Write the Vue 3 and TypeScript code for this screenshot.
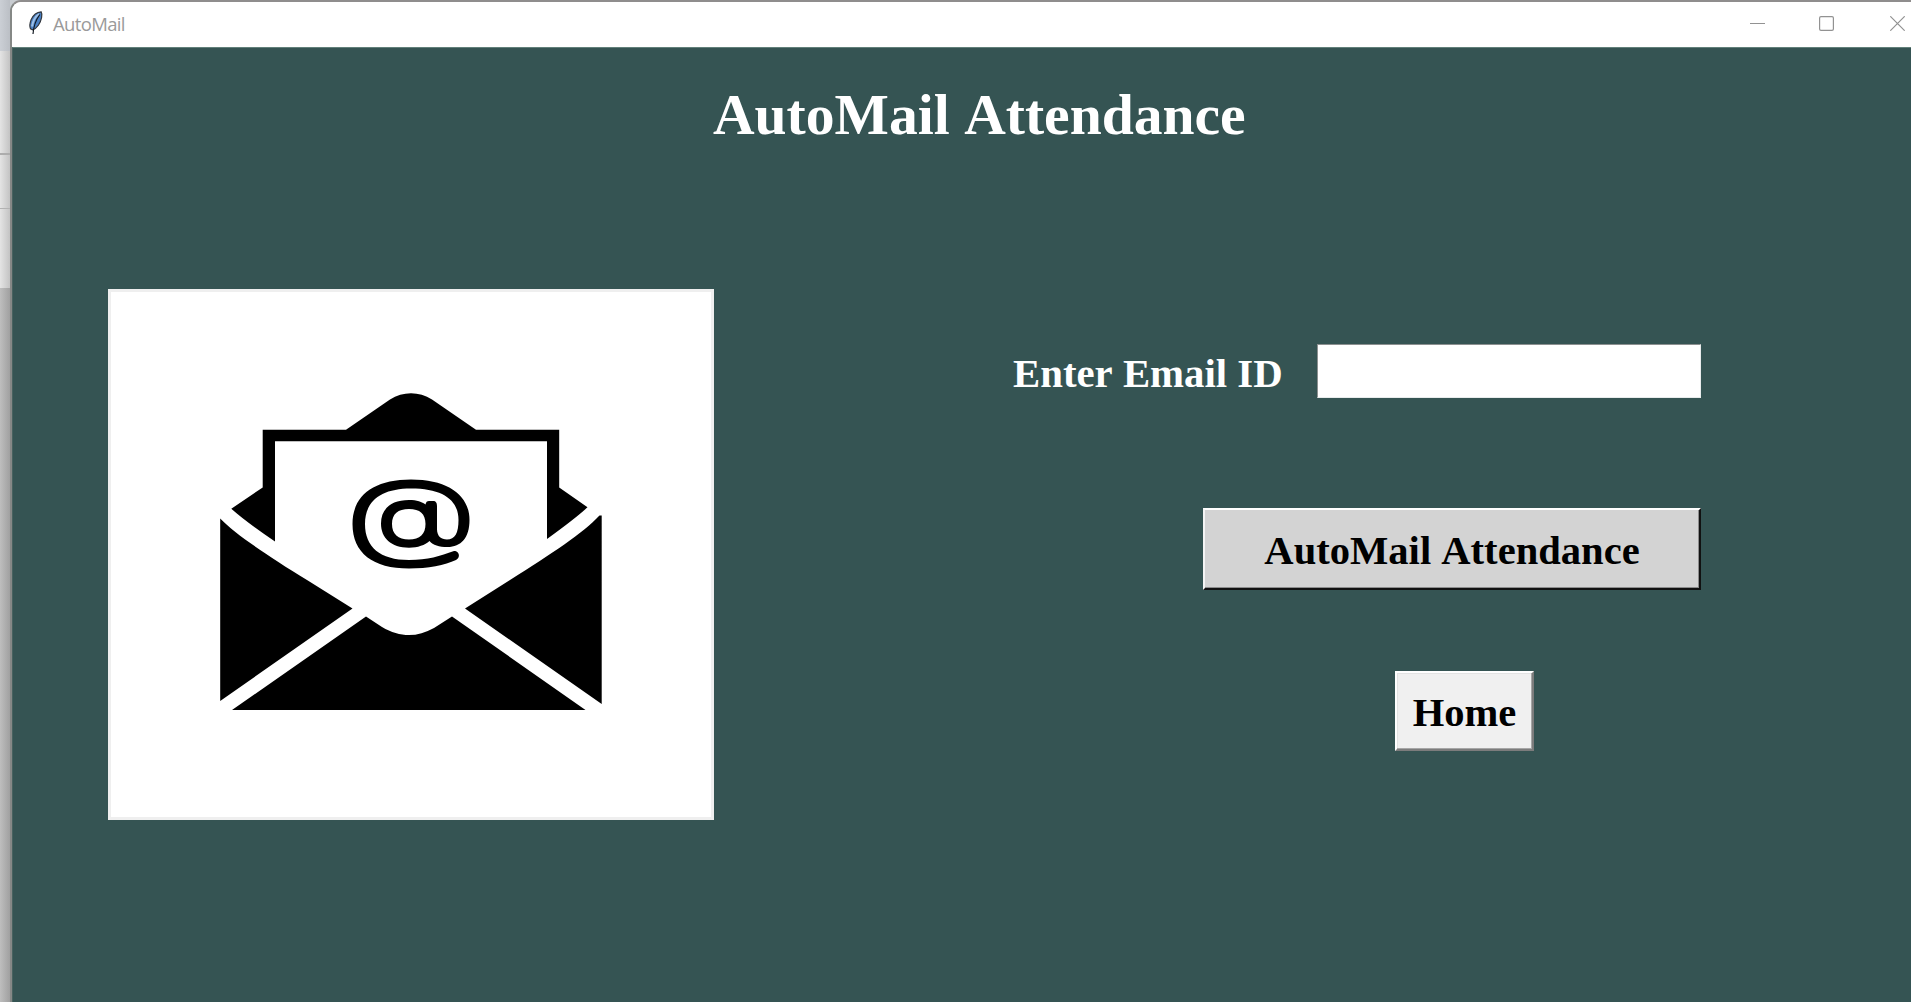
<script setup lang="ts">
import { ref } from 'vue'

const email = ref<string>('')
</script>

<template>
  <div class="desktop">
    <aside class="behind">
      <div class="strip strip-top"></div>
      <div class="strip strip-a"></div>
      <div class="strip strip-b"></div>
      <div class="strip strip-c"></div>
      <div class="strip strip-rest"></div>
    </aside>
    <main class="window">
      <header class="titlebar">
        <svg class="feather" width="16" height="24" viewBox="0 0 16 24">
          <path d="M13.2 .8C8.500 1.200 5 4.500 3.200 8.500C1.600 12.500 1.500 15.500 2.500 17.800L4.600 18.800C9 17.500 12.600 12 13.600 6.500C14 4 14 2 13.200 .8Z" fill="#4a80c4" stroke="#33373d" stroke-width="1.200" />
          <path d="M11 3C7.500 5.500 4.800 10.500 4 15.500" fill="none" stroke="#9dbfe6" stroke-width="2" />
          <path d="M11.800 3.500C8.500 8 5.700 14 5 23" fill="none" stroke="#111820" stroke-width="1.200" />
        </svg>
        <span class="caption">AutoMail</span>
        <div class="controls">
          <svg width="15" height="15" viewBox="0 0 15 15"><path d="M0 7.5H15" stroke="#929292" /></svg>
          <svg width="15" height="15" viewBox="0 0 15 15"><rect x=".6" y=".6" width="13.8" height="13.8" rx="1.4" fill="none" stroke="#929292" stroke-width="1.2" /></svg>
          <svg width="15" height="15" viewBox="0 0 15 15"><path d="M.3 .3L14.7 14.7M14.7 .3L.3 14.7" stroke="#929292" stroke-width="1.2" /></svg>
        </div>
      </header>
      <section class="client">
        <h1>AutoMail Attendance</h1>
        <div class="body">
          <div class="picture">
            <svg width="600" height="525" viewBox="111 292 600 525">
              <path d="M262.7 429.7H346L390 399.500C403 391.200 419 391.200 432 399.500L476 429.700H559.200V487.500L587.500 507.300Q576 518 547 539V441.300H275V541.500Q245 521 231.300 508.700L262.700 487.500Z" />
              <path d="M220.200 518.500C235 534 268 556 307 580L352.500 608.500L220.200 701Z" />
              <path d="M601.700 515.500H599.500C583 533 553 553 510 580L465 608.500L601.700 704Z" />
              <path d="M232 710L366 616.500L382 627C400 637.600 417 637.600 434 628L452 616.500L585.500 710Z" />
              <path fill-rule="evenodd" d="M454 551C459 551 461 557 456 560C445 565 428 568.500 409 568.500C373 568.500 352.500 553 352.500 524C352.500 496 373 479.500 411 479.500C449 479.500 469.500 496 469.500 520C469.500 538 461 547 447.500 547C439 547 433 545 429.500 541C425 545 418 547.700 409 547.700C391 547.700 381 538 381 523.500C381 509 391 500 409 500C417 500 422 502 425.500 504.500C426 502 427 501 429 501H433C436 501 437 503 437 506V529C437 536 441 539.500 447 539.500C455 539.500 458.500 533 458.500 520C458.500 500 443 488.500 411 488.500C381 488.500 365 501 365 524C365 547 380 560 409 560C428 560 440 556 454 551ZM409 509C398 509 392 514 392 524C392 534 398 539.500 409 539.500C420 539.500 425.500 534 425.500 524C425.500 514 420 509 409 509Z" />
            </svg>
          </div>
          <form class="form" @submit.prevent>
            <div class="field">
              <label for="email">Enter Email ID</label>
              <input id="email" v-model="email" type="text" />
            </div>
            <button class="send" type="button">AutoMail Attendance</button>
            <button class="home" type="button">Home</button>
          </form>
        </div>
      </section>
    </main>
  </div>
</template>

<style>
body {
  margin: 0;
  overflow: hidden;
}
</style>

<style scoped>
.desktop {
  display: flex;
  width: 1911px;
  height: 1002px;
  overflow: hidden;
  background: linear-gradient(#c8ccd1 0 50px, #bbb 50px);
}
.behind {
  display: flex;
  flex-direction: column;
  width: 10px;
  flex: none;
}
.strip {
  box-sizing: border-box;
  background: linear-gradient(90deg, #e4e4e4, #c3c3c3);
}
.strip-top {
  height: 51px;
  background: linear-gradient(90deg, #cbcfd5, #bbbfc5);
}
.strip-a {
  height: 104px;
  border-bottom: 2px solid #adadad;
}
.strip-b {
  height: 54px;
  border-bottom: 1px solid #b2b2b2;
}
.strip-c {
  height: 79px;
}
.strip-rest {
  flex: 1;
  background: linear-gradient(90deg, #bebebe, #a0a0a0);
}
.window {
  box-sizing: border-box;
  display: flex;
  flex-direction: column;
  flex: 1;
  border-top: 2px solid #8f8d8d;
  border-left: 2px solid #858886;
  border-top-left-radius: 11px;
  overflow: hidden;
  background: #fff;
}
.titlebar {
  display: flex;
  align-items: center;
  height: 45px;
  flex: none;
  background: #fff;
}
.feather {
  margin: -3px 0 0 16px;
}
.caption {
  margin: -1px 0 0 9px;
  color: #9a9a9a;
  font: 18.5px/24px "Open Sans", "Noto Sans", sans-serif;
  letter-spacing: -0.65px;
}
.controls {
  display: flex;
  align-items: center;
  gap: 54px;
  margin: -2px 6px 0 auto;
}
.controls svg:last-child {
  margin-left: 2px;
}
.client {
  box-sizing: border-box;
  flex: 1;
  border-top: 1px solid #62807a;
  border-left: 1px solid #47625f;
  background: #355453;
  font-family: "Liberation Serif", "Times New Roman", serif;
  font-weight: bold;
  font-kerning: none;
}
h1 {
  margin: 33px 0 0 700px;
  color: #fff;
  font-size: 57.6px;
  line-height: 68px;
  white-space: nowrap;
}
.body {
  display: flex;
  align-items: flex-start;
  margin: 139px 0 0 95px;
}
.picture {
  box-sizing: border-box;
  width: 606px;
  height: 531px;
  margin-top: 1px;
  flex: none;
  border: 3px solid #efefef;
  background: #fff;
}
.picture svg {
  display: block;
}
.form {
  display: flex;
  flex-direction: column;
  align-items: flex-end;
  width: 688px;
  margin: 56px 0 0 299px;
}
.field {
  display: flex;
  align-items: center;
  justify-content: space-between;
  width: 100%;
}
label {
  margin-top: 5px;
  color: #fff;
  font-size: 40.8px;
  line-height: 48px;
  white-space: nowrap;
}
input {
  box-sizing: border-box;
  width: 384px;
  height: 54px;
  margin: 0;
  padding: 0 8px;
  border: 1px solid;
  border-color: #8c9090 #e8ecec #e8ecec #8c9090;
  border-radius: 0;
  outline: none;
  font: inherit;
  font-size: 32px;
  background: #fff;
}
button {
  box-sizing: border-box;
  padding: 0;
  color: #000;
  font: inherit;
  font-kerning: none;
  font-size: 40.6px;
  line-height: 48px;
  border-radius: 0;
  white-space: nowrap;
}
.send {
  width: 498px;
  height: 82px;
  margin-top: 110px;
  padding-top: 3px;
  border: 2px solid;
  border-color: #fff #111 #111 #f4f4f4;
  box-shadow: inset -1px -1px #8c8c8c;
  background: #d3d3d3;
}
.home {
  width: 139px;
  height: 80px;
  margin: 81px 167px 0 0;
  padding-top: 3px;
  border: 2px solid;
  border-color: #fff #7c7c7c #7c7c7c #fff;
  box-shadow: inset -1px -1px #a6a6a6, inset 1px 1px #e3e3e3;
  background: #f0f0f0;
}
</style>
